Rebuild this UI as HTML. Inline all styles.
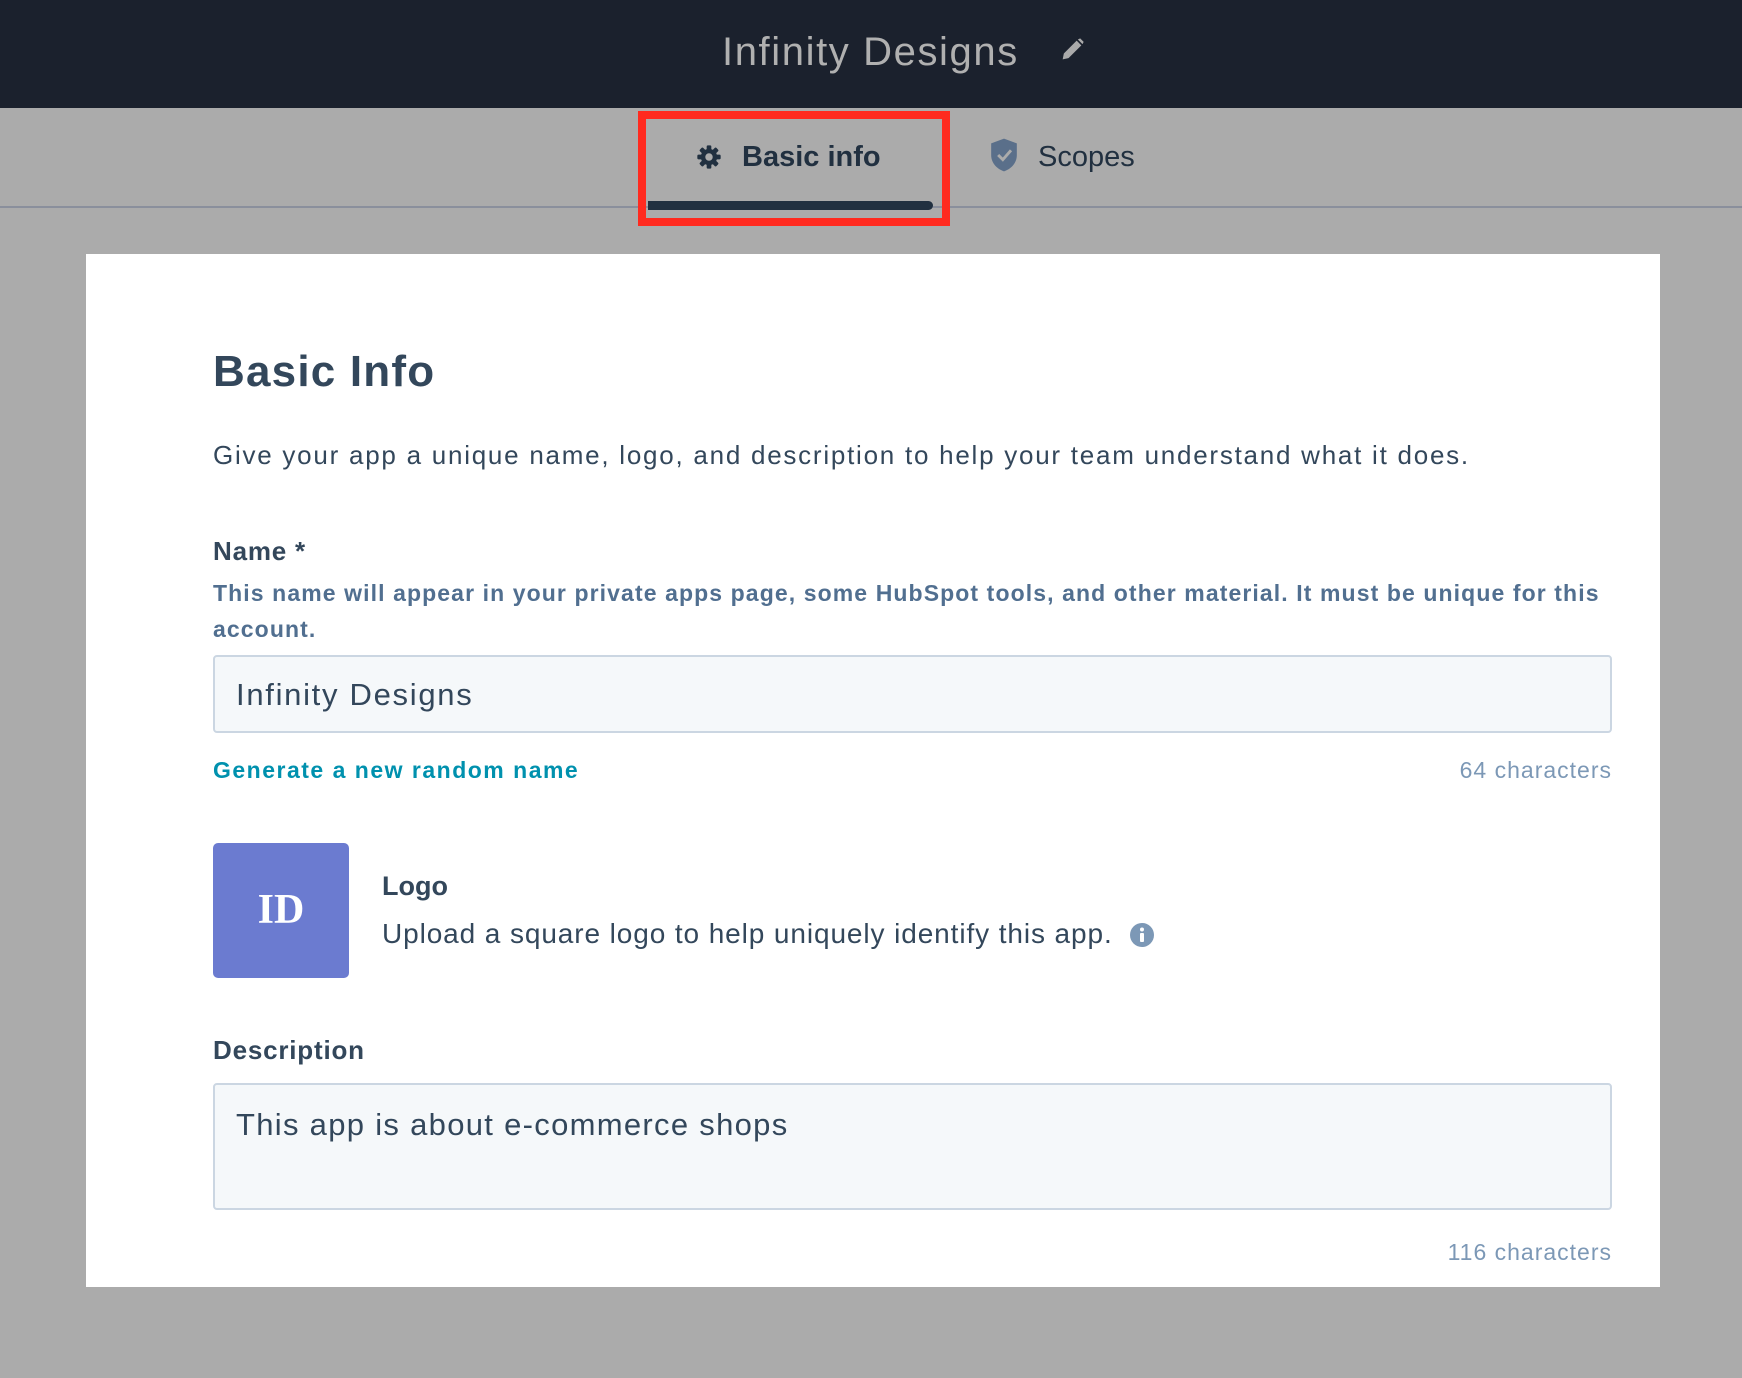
<!DOCTYPE html>
<html><head><style>
*{margin:0;padding:0;box-sizing:border-box}
body{width:1742px;height:1378px;background:#ababab;font-family:"Liberation Sans",sans-serif;position:relative;overflow:hidden;color:#33475b}
.a{position:absolute;white-space:nowrap}
</style></head><body>
<div class="a" style="left:0;top:0;width:1742px;height:108px;background:#1b212d"></div>
<div class="a" style="left:722px;top:28px;font-size:40px;color:#b0b0b0;line-height:48px;letter-spacing:1.6px">Infinity Designs</div>
<svg class="a" style="left:1058px;top:36px" width="28" height="28" viewBox="0 0 24 24"><path d="M4 20l1-5L16 4l4 4L9 19z M17 3l2-1 3 3-1 2z" fill="#aaa"/></svg>
<div class="a" style="left:0;top:206px;width:1742px;height:2px;background:#8a8f9c"></div>
<div class="a" style="left:638px;top:111px;width:312px;height:115px;border:8px solid #ff2a1f"></div>
<div class="a" style="left:648px;top:201px;width:285px;height:9px;background:#213040;border-radius:0 5px 5px 0"></div>
<svg class="a" style="left:695px;top:143px" width="28" height="28" viewBox="0 0 24 24"><g fill="#213040"><circle cx="12" cy="12" r="7"/><rect x="10" y="2" width="4" height="20" rx="1"/><rect x="2" y="10" width="20" height="4" rx="1"/><rect x="10" y="2" width="4" height="20" rx="1" transform="rotate(45 12 12)"/><rect x="10" y="2" width="4" height="20" rx="1" transform="rotate(-45 12 12)"/></g><circle cx="12" cy="12" r="3.2" fill="#ababab"/></svg>
<div class="a" style="left:742px;top:139px;font-size:29px;font-weight:bold;color:#213040;line-height:36px">Basic info</div>
<svg class="a" style="left:990px;top:137px" width="28" height="36" viewBox="0 0 24 30"><path d="M12 1L23 5v10c0 7-5 12-11 14C6 27 1 22 1 15V5z" fill="#5a6f8a"/><path d="M7 15l4 4 7-8" stroke="#ababab" stroke-width="2.5" fill="none"/></svg>
<div class="a" style="left:1038px;top:139px;font-size:29px;color:#213040;line-height:36px">Scopes</div>
<div class="a" style="left:86px;top:254px;width:1574px;height:1033px;background:#fff"></div>
<div class="a" style="left:213px;top:346px;font-size:44px;font-weight:bold;line-height:52px;letter-spacing:1.2px">Basic Info</div>
<div class="a" style="left:213px;top:439px;font-size:26px;line-height:32px;letter-spacing:1.75px">Give your app a unique name, logo, and description to help your team understand what it does.</div>
<div class="a" style="left:213px;top:535px;font-size:26px;font-weight:bold;line-height:32px;letter-spacing:0.8px">Name *</div>
<div class="a" style="left:213px;top:575px;font-size:23px;font-weight:bold;color:#516f90;line-height:36px;white-space:normal;width:1400px;letter-spacing:1.1px">This name will appear in your private apps page, some HubSpot tools, and other material. It must be unique for this account.</div>
<div class="a" style="left:213px;top:655px;width:1399px;height:78px;background:#f5f8fa;border:2px solid #cbd6e2;border-radius:4px"></div>
<div class="a" style="left:236px;top:676px;font-size:31px;line-height:38px;letter-spacing:1.7px">Infinity Designs</div>
<div class="a" style="left:213px;top:755px;font-size:23px;font-weight:bold;color:#0091ae;line-height:30px;letter-spacing:1.5px">Generate a new random name</div>
<div class="a" style="right:130px;top:755px;font-size:23px;color:#7c98b6;line-height:30px;letter-spacing:1px">64 characters</div>
<div class="a" style="left:213px;top:843px;width:136px;height:135px;background:#6b7bd0;border-radius:5px;color:#fff;font-family:'Liberation Serif',serif;font-weight:bold;font-size:42px;text-align:center;line-height:135px">ID</div>
<div class="a" style="left:382px;top:870px;font-size:27px;font-weight:bold;line-height:32px">Logo</div>
<div class="a" style="left:382px;top:917px;font-size:28px;line-height:34px;letter-spacing:0.9px">Upload a square logo to help uniquely identify this app.</div>
<svg class="a" style="left:1130px;top:923px" width="24" height="24" viewBox="0 0 24 24"><circle cx="12" cy="12" r="12" fill="#7c98b6"/><circle cx="12" cy="6.5" r="2" fill="#fff"/><rect x="10" y="10" width="4" height="9" rx="1" fill="#fff"/></svg>
<div class="a" style="left:213px;top:1034px;font-size:26px;font-weight:bold;line-height:32px;letter-spacing:0.8px">Description</div>
<div class="a" style="left:213px;top:1083px;width:1399px;height:127px;background:#f5f8fa;border:2px solid #cbd6e2;border-radius:4px"></div>
<div class="a" style="left:236px;top:1106px;font-size:31px;line-height:38px;letter-spacing:1.3px">This app is about e-commerce shops</div>
<div class="a" style="right:130px;top:1237px;font-size:23px;color:#7c98b6;line-height:30px;letter-spacing:1px">116 characters</div>
</body></html>
